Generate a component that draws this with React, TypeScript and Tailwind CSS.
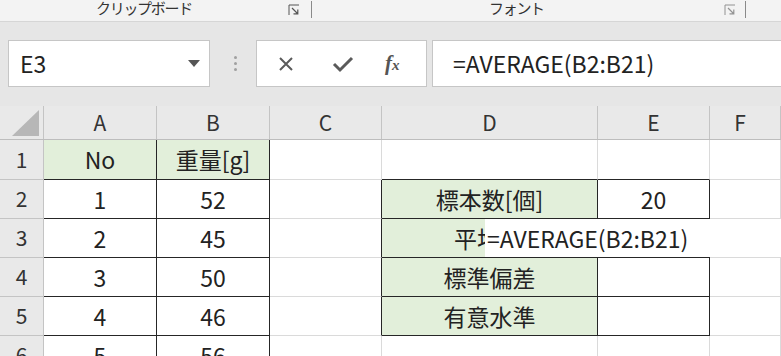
const font = "font-['Noto_Sans_CJK_JP','Noto_Sans',sans-serif]";

type Cell = {
  text?: string;
  green?: boolean;
  r?: boolean; // black right border
  b?: boolean; // black bottom border
};

const widths = ["w-[113px]", "w-[113px]", "w-[112px]", "w-[216px]", "w-[112px]", "flex-1"];

const rows: { h: string; cells: Cell[] }[] = [
  {
    h: "h-[40px]",
    cells: [
      { text: "No", green: true, r: true, b: true },
      { text: "重量[g]", green: true, r: true, b: true },
      {},
      { b: true },
      { b: true },
      {},
    ],
  },
  {
    h: "h-[39px]",
    cells: [
      { text: "1", r: true, b: true },
      { text: "52", r: true, b: true },
      { r: true },
      { text: "標本数[個]", green: true, r: true, b: true },
      { text: "20", r: true, b: true },
      {},
    ],
  },
  {
    h: "h-[39px]",
    cells: [
      { text: "2", r: true, b: true },
      { text: "45", r: true, b: true },
      { r: true },
      { green: true, r: true, b: true },
      { r: true, b: true },
      {},
    ],
  },
  {
    h: "h-[39px]",
    cells: [
      { text: "3", r: true, b: true },
      { text: "50", r: true, b: true },
      { r: true },
      { text: "標準偏差", green: true, r: true, b: true },
      { r: true, b: true },
      {},
    ],
  },
  {
    h: "h-[39px]",
    cells: [
      { text: "4", r: true, b: true },
      { text: "46", r: true, b: true },
      { r: true },
      { text: "有意水準", green: true, r: true, b: true },
      { r: true, b: true },
      {},
    ],
  },
  {
    h: "h-[39px]",
    cells: [
      { text: "5", r: true, b: true },
      { text: "56", r: true, b: true },
      {},
      {},
      {},
      {},
    ],
  },
];

function Launcher() {
  return (
    <svg width="12" height="12" viewBox="0 0 12 12" className="text-[#555]">
      <path d="M1 11V1h10" fill="none" stroke="currentColor" strokeWidth="1" />
      <path d="M4 4l5.5 5.5M5.5 9.8h4.3V5.5" fill="none" stroke="currentColor" strokeWidth="1.2" />
    </svg>
  );
}

export default function App() {
  return (
    <div className={`h-[356px] w-[781px] overflow-hidden bg-white ${font}`}>
      {/* ribbon group labels */}
      <div className="flex h-[22px] border-b border-[#d6d6d6] bg-[#f3f3f3] text-[15px] leading-[17px] text-[#333]">
        <div className="flex w-[312px] items-start">
          <span className="ml-[96px] mt-[-1px] tracking-[-1.3px]">クリップボード</span>
          <span className="ml-auto mr-[11px] mt-[4px]">
            <Launcher />
          </span>
          <span className="mt-[1px] h-[17px] w-px bg-[#8a8a8a]" />
        </div>
        <div className="flex w-[434px] items-start">
          <span className="ml-[177px] mt-[-1px] tracking-[-1.3px]">フォント</span>
          <span className="ml-auto mr-[9px] mt-[4px] opacity-60">
            <Launcher />
          </span>
          <span className="mt-[1px] h-[17px] w-px bg-[#8a8a8a]" />
        </div>
      </div>

      {/* formula bar */}
      <div className="flex h-[84px] items-start bg-[#e6e6e6] pt-[18px]">
        <div className="ml-[8px] flex h-[47px] w-[202px] items-center border border-[#c6c6c6] bg-white pl-[11px] pr-[9px]">
          <span className="text-[23px] text-[#222]">E3</span>
          <svg width="12" height="7" viewBox="0 0 12 7" className="ml-auto">
            <path d="M0 0h12L6 7z" fill="#555" />
          </svg>
        </div>
        <div className="ml-[22px] flex h-[47px] w-[6px] flex-col items-center justify-center gap-[3px]">
          <span className="h-[3px] w-[3px] rounded-full bg-[#a0a0a0]" />
          <span className="h-[3px] w-[3px] rounded-full bg-[#a0a0a0]" />
          <span className="h-[3px] w-[3px] rounded-full bg-[#a0a0a0]" />
        </div>
        <div className="ml-[18px] flex h-[47px] w-[171px] items-center border border-[#c6c6c6] bg-white">
          <svg width="16" height="16" viewBox="0 0 16 16" className="ml-[21px]">
            <path d="M2 2l12 12M14 2L2 14" stroke="#5a5a5a" strokeWidth="2" />
          </svg>
          <svg width="22" height="18" viewBox="0 0 22 18" className="ml-[38px]">
            <path d="M2 9l6 6L20 3" fill="none" stroke="#5a5a5a" strokeWidth="3" />
          </svg>
          <span className="ml-[31px] font-['Liberation_Serif',serif] text-[21px] font-bold italic leading-none text-[#555]">
            f<span className="text-[15px]">x</span>
          </span>
        </div>
        <div className="ml-[5px] flex h-[47px] flex-1 items-center border border-r-0 border-[#c6c6c6] bg-white pl-[20px]">
          <span className="text-[23px] text-[#222]">=AVERAGE(B2:B21)</span>
        </div>
      </div>

      {/* column headers */}
      <div className="flex h-[34px] border-b border-[#bdbdbd] bg-[#e9e9e9] text-[21px] text-[#333]">
        <div className="relative w-[44px] border-r border-[#c4c4c4]">
          <svg width="27" height="26" viewBox="0 0 27 26" className="absolute bottom-[3px] right-[4px]">
            <path d="M27 0V26H0z" fill="#b7b7b7" />
          </svg>
        </div>
        {["A", "B", "C", "D", "E", "F"].map((c, i) => (
          <div
            key={c}
            className={`${widths[i]} flex items-center justify-center border-r border-[#c4c4c4] ${i === 5 ? "pr-[10px]" : ""}`}
          >
            {c}
          </div>
        ))}
      </div>

      {/* rows */}
      {rows.map((row, ri) => (
        <div key={ri} className={`relative flex ${row.h}`}>
          <div className="flex w-[44px] items-center justify-center border-r border-b border-[#c4c4c4] bg-[#e9e9e9] text-[21px] text-[#333]">
            {ri + 1}
          </div>
          {row.cells.map((cell, ci) => (
            <div
              key={ci}
              className={[
                widths[ci],
                "flex items-center justify-center overflow-hidden whitespace-nowrap border-r border-b text-[23px] text-[#222]",
                cell.green ? "bg-[#e2efda]" : "bg-white",
                cell.r ? "border-r-[#262626]" : "border-r-[#dadada]",
                cell.b ? "border-b-[#262626]" : "border-b-[#dadada]",
              ].join(" ")}
            >
              {ri === 2 && ci === 3 ? (
                <div className="flex h-full w-full items-center overflow-hidden pr-[113px]">
                  <span className="ml-[72px] whitespace-nowrap">平均値</span>
                </div>
              ) : (
                cell.text
              )}
            </div>
          ))}
          {ri === 2 && (
            <div className="absolute bottom-[1px] left-[485px] right-0 top-0 flex items-center bg-white pl-[2px] text-[23px] text-[#222]">
              =AVERAGE(B2:B21)
            </div>
          )}
        </div>
      ))}
    </div>
  );
}
